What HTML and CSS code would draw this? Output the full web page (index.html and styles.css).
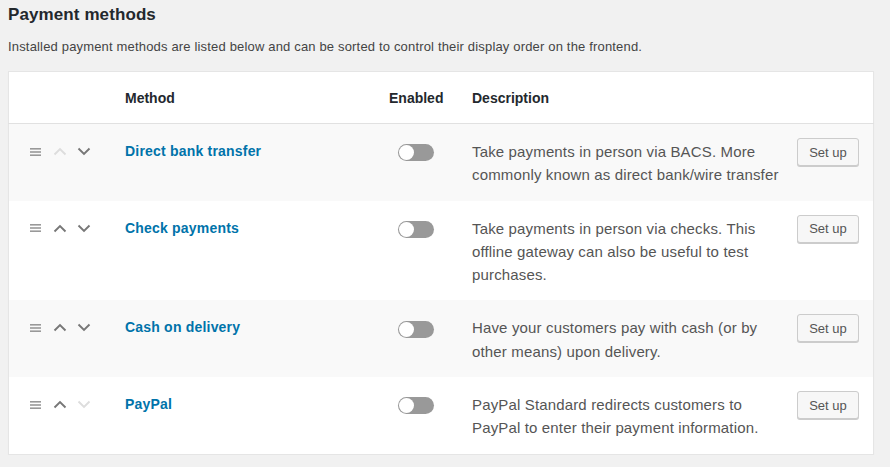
FILE: index.html
```html
<!DOCTYPE html>
<html>
<head>
<meta charset="utf-8">
<link rel="stylesheet" href="styles.css">
</head>
<body>
<h2 class="title">Payment methods</h2>
<p class="intro">Installed payment methods are listed below and can be sorted to control their display order on the frontend.</p>
<table class="methods">
  <thead>
    <tr>
      <th class="c-sort"></th>
      <th class="c-name">Method</th>
      <th class="c-status">Enabled</th>
      <th class="c-desc">Description</th>
      <th class="c-action"></th>
    </tr>
  </thead>
  <tbody>
    <tr class="alt">
      <td class="c-sort"><div class="sort">
        <svg class="handle" width="11" height="8" viewBox="0 0 11 8"><rect x="0" y="0" width="11" height="1.6"/><rect x="0" y="3.2" width="11" height="1.6"/><rect x="0" y="6.4" width="11" height="1.6"/></svg>
        <svg class="chev off" width="14" height="9" viewBox="0 0 14 9"><path d="M1.5 7.5 L7 2 L12.5 7.5"/></svg>
        <svg class="chev" width="14" height="9" viewBox="0 0 14 9"><path d="M1.5 1.5 L7 7 L12.5 1.5"/></svg>
      </div></td>
      <td class="c-name"><a href="#">Direct bank transfer</a></td>
      <td class="c-status"><span class="toggle"></span></td>
      <td class="c-desc">Take payments in person via BACS. More commonly known as direct bank/wire transfer</td>
      <td class="c-action"><button class="btn">Set up</button></td>
    </tr>
    <tr>
      <td class="c-sort"><div class="sort">
        <svg class="handle" width="11" height="8" viewBox="0 0 11 8"><rect x="0" y="0" width="11" height="1.6"/><rect x="0" y="3.2" width="11" height="1.6"/><rect x="0" y="6.4" width="11" height="1.6"/></svg>
        <svg class="chev" width="14" height="9" viewBox="0 0 14 9"><path d="M1.5 7.5 L7 2 L12.5 7.5"/></svg>
        <svg class="chev" width="14" height="9" viewBox="0 0 14 9"><path d="M1.5 1.5 L7 7 L12.5 1.5"/></svg>
      </div></td>
      <td class="c-name"><a href="#">Check payments</a></td>
      <td class="c-status"><span class="toggle"></span></td>
      <td class="c-desc">Take payments in person via checks. This offline gateway can also be useful to test purchases.</td>
      <td class="c-action"><button class="btn">Set up</button></td>
    </tr>
    <tr class="alt">
      <td class="c-sort"><div class="sort">
        <svg class="handle" width="11" height="8" viewBox="0 0 11 8"><rect x="0" y="0" width="11" height="1.6"/><rect x="0" y="3.2" width="11" height="1.6"/><rect x="0" y="6.4" width="11" height="1.6"/></svg>
        <svg class="chev" width="14" height="9" viewBox="0 0 14 9"><path d="M1.5 7.5 L7 2 L12.5 7.5"/></svg>
        <svg class="chev" width="14" height="9" viewBox="0 0 14 9"><path d="M1.5 1.5 L7 7 L12.5 1.5"/></svg>
      </div></td>
      <td class="c-name"><a href="#">Cash on delivery</a></td>
      <td class="c-status"><span class="toggle"></span></td>
      <td class="c-desc">Have your customers pay with cash (or by other means) upon delivery.</td>
      <td class="c-action"><button class="btn">Set up</button></td>
    </tr>
    <tr>
      <td class="c-sort"><div class="sort">
        <svg class="handle" width="11" height="8" viewBox="0 0 11 8"><rect x="0" y="0" width="11" height="1.6"/><rect x="0" y="3.2" width="11" height="1.6"/><rect x="0" y="6.4" width="11" height="1.6"/></svg>
        <svg class="chev" width="14" height="9" viewBox="0 0 14 9"><path d="M1.5 7.5 L7 2 L12.5 7.5"/></svg>
        <svg class="chev off" width="14" height="9" viewBox="0 0 14 9"><path d="M1.5 1.5 L7 7 L12.5 1.5"/></svg>
      </div></td>
      <td class="c-name"><a href="#">PayPal</a></td>
      <td class="c-status"><span class="toggle"></span></td>
      <td class="c-desc">PayPal Standard redirects customers to PayPal to enter their payment information.</td>
      <td class="c-action"><button class="btn">Set up</button></td>
    </tr>
  </tbody>
</table>
</body>
</html>
```

FILE: styles.css
```css
html, body {
  margin: 0;
  padding: 0;
}
body {
  background: #f1f1f1;
  font-family: "Liberation Sans", Arial, sans-serif;
  color: #444;
  padding: 0 16px 0 8px;
}
.title {
  margin: 0;
  padding-top: 3px;
  font-size: 17px;
  line-height: 23px;
  font-weight: bold;
  color: #23282d;
  letter-spacing: 0.1px;
}
.intro {
  margin: 12px 0 0;
  font-size: 13px;
  line-height: 18px;
  letter-spacing: 0.17px;
  color: #444;
}
.methods {
  margin-top: 15px;
  width: 866px;
  border-collapse: collapse;
  table-layout: fixed;
  background: #fff;
  border: 1px solid #e5e5e5;
  box-shadow: 0 1px 1px rgba(0,0,0,0.04);
  font-size: 14px;
}
.methods th {
  text-align: left;
  font-weight: bold;
  color: #23282d;
  height: 51px;
  padding: 0 12px;
  border-bottom: 1px solid #e1e1e1;
}
.methods td {
  vertical-align: top;
  padding: 16px 12px 14px;
  line-height: 23.3px;
}
.methods tr.alt td {
  background: #f9f9f9;
}
.c-sort { width: 71px; }
th.c-sort, td.c-sort { padding-left: 21px; }
.c-name { width: 240px; }
.c-status { width: 59px; }
.c-desc { width: 312px; }
th.c-desc, td.c-desc { padding-right: 4px; }
.c-action { width: 62px; }
th.c-action, td.c-action { padding-left: 9px; padding-right: 14px; }
.sort {
  display: flex;
  align-items: center;
  height: 23px;
}
.handle { fill: #999; margin-right: 12px; }
.chev { fill: none; stroke: #777; stroke-width: 1.9; margin-right: 10px; }
.chev.off { stroke: #ddd; }
.c-name a {
  color: #0073aa;
  font-weight: bold;
  letter-spacing: 0.2px;
  text-decoration: none;
}
.toggle {
  display: inline-block;
  vertical-align: middle;
  margin-left: 9px;
  margin-top: 1px;
  width: 36px;
  height: 17px;
  border-radius: 9px;
  background: #999;
  position: relative;
}
.toggle::before {
  content: "";
  position: absolute;
  left: 1px;
  top: 1px;
  width: 15px;
  height: 15px;
  border-radius: 50%;
  background: #fff;
}
td.c-desc {
  color: #555;
  font-size: 15px;
  letter-spacing: 0.15px;
}
.btn {
  font-family: "Liberation Sans", Arial, sans-serif;
  font-size: 13px;
  color: #555;
  background: #f7f7f7;
  border: 1px solid #ccc;
  border-radius: 3px;
  box-shadow: 0 1px 0 #ccc;
  height: 28px;
  width: 62px;
  padding: 0;
  margin-top: -2px;
  cursor: pointer;
}
```
